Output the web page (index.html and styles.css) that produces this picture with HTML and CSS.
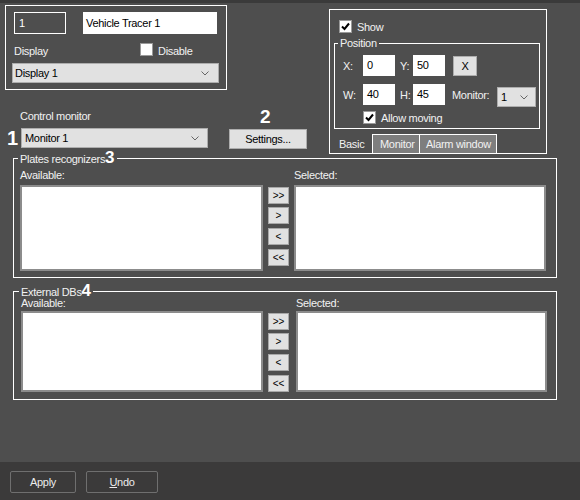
FILE: index.html
```html
<!DOCTYPE html>
<html>
<head>
<meta charset="utf-8">
<link rel="stylesheet" href="styles.css">
</head>
<body>
<div class="page">
  <div class="top">
    <div class="left-col">
      <div class="box1">
        <div class="row1">
          <div class="field dark">1</div>
          <div class="field white f-name">Vehicle Tracer 1</div>
        </div>
        <div class="row2">
          <span class="lbl-display">Display</span>
          <span class="chk"></span>
          <span class="disable-txt">Disable</span>
        </div>
        <div class="combo display-combo"><span>Display 1</span><svg class="chev" width="8" height="5" viewBox="0 0 8 5"><polyline points="0.5,0.5 4,4 7.5,0.5" fill="none" stroke="#666" stroke-width="1"/></svg></div>
      </div>
      <div class="cm-head"><span class="cm-label">Control monitor</span><span class="num num2">2</span></div>
      <div class="cm-row">
        <span class="num num1">1</span>
        <div class="combo monitor-combo"><span>Monitor 1</span><svg class="chev" width="8" height="5" viewBox="0 0 8 5"><polyline points="0.5,0.5 4,4 7.5,0.5" fill="none" stroke="#666" stroke-width="1"/></svg></div>
        <div class="btn settings">Settings...</div>
      </div>
    </div>
    <div class="right-col">
      <div class="tabbox">
        <div class="chk-row show-row">
          <span class="chk"><svg width="11" height="11" viewBox="0 0 11 11"><polyline points="2,5.5 4.5,8 9,2.5" fill="none" stroke="#000" stroke-width="2"/></svg></span>
          <span>Show</span>
        </div>
        <fieldset class="pos">
          <legend>Position</legend>
          <div class="prow">
            <span class="plab">X:</span><div class="pf">0</div>
            <span class="plab2">Y:</span><div class="pf">50</div>
            <div class="btn xbtn">X</div>
          </div>
          <div class="prow prow2">
            <span class="plab">W:</span><div class="pf">40</div>
            <span class="plab2">H:</span><div class="pf">45</div>
            <span class="mlab">Monitor:</span>
            <div class="combo small-combo"><span>1</span><svg class="chev" width="8" height="5" viewBox="0 0 8 5"><polyline points="0.5,0.5 4,4 7.5,0.5" fill="none" stroke="#666" stroke-width="1"/></svg></div>
          </div>
          <div class="chk-row allow">
            <span class="chk"><svg width="11" height="11" viewBox="0 0 11 11"><polyline points="2,5.5 4.5,8 9,2.5" fill="none" stroke="#000" stroke-width="2"/></svg></span>
            <span>Allow moving</span>
          </div>
        </fieldset>
        <div class="tabs">
          <span class="tab basic">Basic</span>
          <span class="tab t-mon">Monitor</span>
          <span class="tab t-alarm">Alarm window</span>
        </div>
      </div>
    </div>
  </div>

  <fieldset class="group g1">
    <legend>Plates recognizers<span class="num num3">3</span></legend>
    <div class="lists">
      <span class="lab">Available:</span>
      <span></span>
      <span class="lab sel">Selected:</span>
      <div class="list"></div>
      <div class="arrows">
        <div class="abtn">&gt;&gt;</div>
        <div class="abtn">&gt;</div>
        <div class="abtn">&lt;</div>
        <div class="abtn">&lt;&lt;</div>
      </div>
      <div class="list sel"></div>
    </div>
  </fieldset>

  <fieldset class="group g2">
    <legend>External DBs<span class="num num4">4</span></legend>
    <div class="lists">
      <span class="lab">Available:</span>
      <span></span>
      <span class="lab sel">Selected:</span>
      <div class="list"></div>
      <div class="arrows">
        <div class="abtn">&gt;&gt;</div>
        <div class="abtn">&gt;</div>
        <div class="abtn">&lt;</div>
        <div class="abtn">&lt;&lt;</div>
      </div>
      <div class="list sel"></div>
    </div>
  </fieldset>

  <div class="spacer"></div>

  <div class="bar">
    <div class="bbtn apply">Apply</div>
    <div class="bbtn undo"><span class="ul">U</span>ndo</div>
  </div>
</div>
</body>
</html>
```

FILE: styles.css
```css
* { box-sizing: border-box; }
html, body { margin: 0; padding: 0; }
body {
  width: 580px;
  height: 500px;
  overflow: hidden;
  background: #4e4e4e;
  font-family: "Liberation Sans", Arial, sans-serif;
  font-size: 11px;
  letter-spacing: -0.3px;
  line-height: 14px;
  color: #f2f2f2;
}
.page {
  height: 500px;
  display: flex;
  flex-direction: column;
  border-top: 3px solid #3a3a3a;
}
.top {
  display: grid;
  grid-template-columns: 329px 218px;
  align-items: start;
}
.left-col { display: flex; flex-direction: column; }

.box1 {
  margin: 2px 0 0 5px;
  width: 222px;
  height: 85px;
  border: 1px solid #fff;
  padding: 6px 0 0 8px;
}
.row1 { display: flex; height: 22px; }
.field { height: 22px; line-height: 20px; padding-left: 3px; }
.field.dark { width: 52px; border: 1px solid #fff; color: #fff; padding-left: 4px; }
.field.white { background: #fff; color: #000; line-height: 22px; }
.f-name { width: 134px; margin-left: 17px; }
.row2 { display: flex; align-items: flex-start; margin-top: 10px; height: 14px; }
.lbl-display { width: 126px; }
.chk {
  width: 13px; height: 13px; flex: none;
  background: #fff; border: 1px solid #9a9a9a;
  display: flex; align-items: center; justify-content: center;
}
.row2 .chk { margin-top: -1px; }
.disable-txt { margin-left: 5px; }

.combo {
  display: flex; align-items: center; justify-content: space-between;
  height: 20px; background: #e1e1e1; border: 1px solid #adadad;
  color: #000; padding: 0 8px 0 2px;
}
.chev { display: block; }
.display-combo { width: 207px; margin: 5px 0 0 -2px; padding-right: 9px; }

.cm-head { display: flex; align-items: flex-start; height: 14px; margin-top: 19px; padding-left: 20px; }
.cm-label { width: 240px; }
.num {
  font-family: "Liberation Sans", Arial, sans-serif;
  font-weight: 700; color: #fff; letter-spacing: 0;
}
.num2 { font-size: 19px; line-height: 14px; margin-top: 1px; }
.cm-row { display: flex; align-items: flex-start; margin-top: 5px; }
.num1 { width: 21px; padding-left: 7px; font-size: 20px; line-height: 20px; }
.monitor-combo { width: 187px; padding-left: 3px; }
.btn {
  background: #e1e1e1; border: 1px solid #adadad; color: #000;
  display: flex; align-items: center; justify-content: center;
}
.settings { width: 78px; height: 20px; margin: 1px 0 0 21px; }

/* right tab panel */
.right-col { padding-top: 6px; }
.tabbox { width: 218px; border: 1px solid #fff; padding-top: 10px; }
.chk-row { display: flex; align-items: center; height: 13px; gap: 5px; }
.show-row { padding-left: 9px; }
.pos {
  margin: 6px 0 0 4px;
  width: 206px;
  min-inline-size: 0;
  border: 1px solid #fff;
  padding: 8px 0 4px 8px;
}
.pos legend { line-height: 8px; margin-left: -5px; padding: 0 2px; }
.prow { display: flex; align-items: center; height: 21px; }
.plab { width: 20px; }
.pf { width: 32px; height: 21px; background: #fff; color: #000; padding-left: 4px; line-height: 21px; }
.plab2 { width: 18px; padding-left: 5px; }
.xbtn { width: 24px; height: 20px; margin-left: 8px; }
.prow2 { margin-top: 8px; }
.mlab { width: 45px; margin-left: 7px; }
.small-combo { width: 39px; align-self: flex-start; margin-top: 3px; padding: 0 7px 0 3px; }
.allow { margin: 6px 0 0 20px; }
.tabs { display: flex; height: 19px; margin-top: 5px; }
.tab { height: 19px; line-height: 18px; border-top: 1px solid #fff; white-space: nowrap; }
.basic { width: 42px; padding-left: 9px; border-top-color: transparent; }
.t-mon { width: 47px; border-left: 1px solid #fff; background: #7e7e7e; padding-left: 7px; }
.t-alarm { width: 78px; border-left: 1px solid #fff; border-right: 1px solid #fff; background: #7e7e7e; padding-left: 6px; }

/* group boxes */
.group {
  margin: 0 0 0 13px;
  width: 544px;
  min-inline-size: 0;
  border: 1px solid #fff;
}
.group legend { line-height: 8px; margin-left: -2px; padding: 0 2px; white-space: nowrap; }
.num3, .num4 { font-size: 17px; line-height: 8px; }
.g1 { padding: 5px 0 6px 6px; }
.g2 { margin-top: 9px; padding: 0 0 7px 7px; }
.lists { display: grid; column-gap: 5px; }
.g1 .lists { grid-template-columns: 243px 21px 252px; grid-template-rows: 14px 86px; row-gap: 3px; }
.g2 .lists { grid-template-columns: 242px 21px 253px; grid-template-rows: 14px 81px; row-gap: 1px; }
.g2 .sel { margin-left: 2px; }
.list { background: #fff; border: 2px solid #8c8c8c; }
.arrows { display: flex; flex-direction: column; gap: 4px; padding-top: 2px; }
.abtn {
  height: 17px; background: #e1e1e1; border: 1px solid #a8a8a8; color: #000;
  font-size: 10px; line-height: 15px; letter-spacing: 0;
  text-align: center;
}
.abtn:first-child { margin-bottom: -1px; }

.spacer { flex: 1; }
.bar {
  height: 38px; flex: none;
  background: #3b3a3a;
  display: flex; gap: 10px;
  padding: 9px 0 0 10px;
}
.bbtn {
  height: 22px; border: 1px solid #6f6f6f; border-radius: 2px;
  display: flex; align-items: center; justify-content: center;
  color: #ececec;
}
.apply { width: 66px; }
.undo { width: 72px; }
.ul { text-decoration: underline; }
```
